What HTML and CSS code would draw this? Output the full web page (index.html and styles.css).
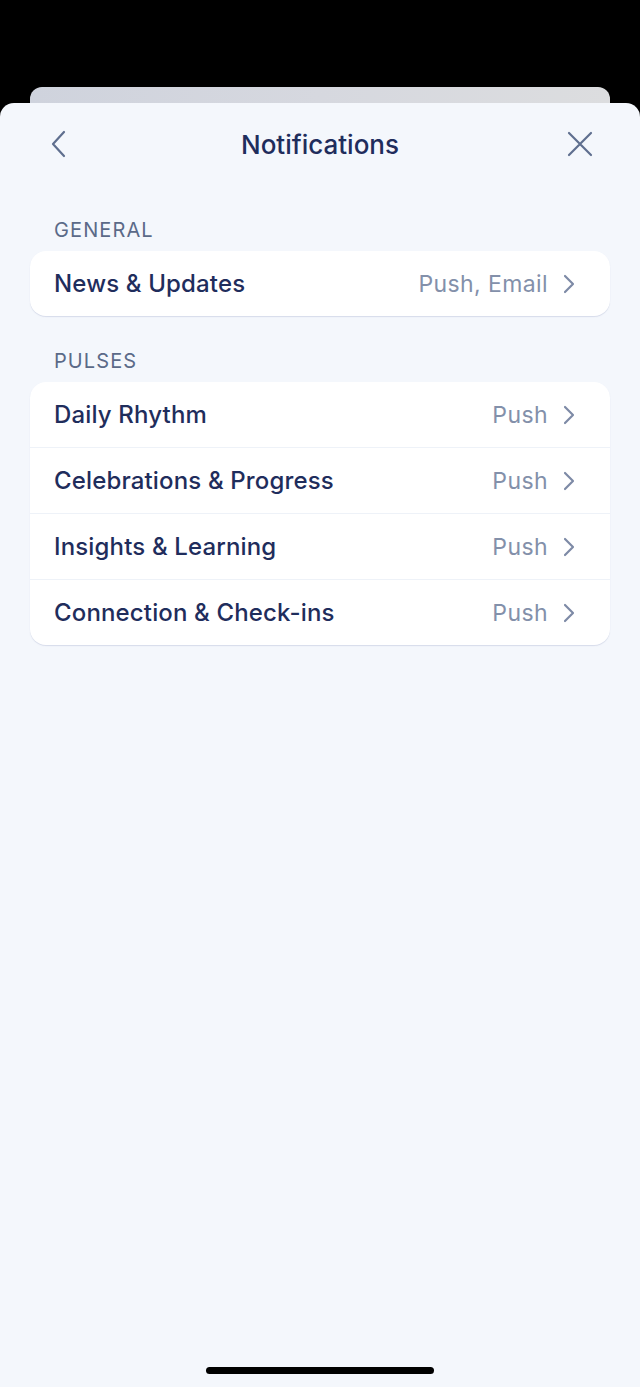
FILE: index.html
```html
<!DOCTYPE html>
<html>
<head>
<meta charset="utf-8">
<link rel="stylesheet" href="styles.css">
</head>
<body>
<div class="screen">
  <div class="back-sheet"></div>
  <div class="sheet">
    <div class="header">
      <button class="icon-btn" aria-label="Back">
        <svg width="24" height="28" viewBox="0 0 24 28"><path d="M16 2 L5 14 L16 26" fill="none" stroke="#5f6f8f" stroke-width="2.2" stroke-linecap="round" stroke-linejoin="round"/></svg>
      </button>
      <div class="title">Notifications</div>
      <button class="icon-btn" aria-label="Close">
        <svg width="26" height="26" viewBox="0 0 26 26"><path d="M2 2 L24 24 M24 2 L2 24" fill="none" stroke="#5f6f8f" stroke-width="2.2" stroke-linecap="round"/></svg>
      </button>
    </div>

    <div class="section-label first">GENERAL</div>
    <div class="card">
      <div class="row"><span class="row-title">News &amp; Updates</span><span class="row-value">Push, Email</span><svg class="chev" width="14" height="20" viewBox="0 0 14 20"><path d="M3 2 L11 10 L3 18" fill="none" stroke="#7d8aa6" stroke-width="2.2" stroke-linecap="round" stroke-linejoin="round"/></svg></div>
    </div>

    <div class="section-label">PULSES</div>
    <div class="card">
      <div class="row"><span class="row-title">Daily Rhythm</span><span class="row-value">Push</span><svg class="chev" width="14" height="20" viewBox="0 0 14 20"><path d="M3 2 L11 10 L3 18" fill="none" stroke="#7d8aa6" stroke-width="2.2" stroke-linecap="round" stroke-linejoin="round"/></svg></div>
      <div class="row"><span class="row-title">Celebrations &amp; Progress</span><span class="row-value">Push</span><svg class="chev" width="14" height="20" viewBox="0 0 14 20"><path d="M3 2 L11 10 L3 18" fill="none" stroke="#7d8aa6" stroke-width="2.2" stroke-linecap="round" stroke-linejoin="round"/></svg></div>
      <div class="row"><span class="row-title">Insights &amp; Learning</span><span class="row-value">Push</span><svg class="chev" width="14" height="20" viewBox="0 0 14 20"><path d="M3 2 L11 10 L3 18" fill="none" stroke="#7d8aa6" stroke-width="2.2" stroke-linecap="round" stroke-linejoin="round"/></svg></div>
      <div class="row"><span class="row-title">Connection &amp; Check-ins</span><span class="row-value">Push</span><svg class="chev" width="14" height="20" viewBox="0 0 14 20"><path d="M3 2 L11 10 L3 18" fill="none" stroke="#7d8aa6" stroke-width="2.2" stroke-linecap="round" stroke-linejoin="round"/></svg></div>
    </div>

    <div class="spacer"></div>
    <div class="home-indicator"></div>
  </div>
</div>
</body>
</html>
```

FILE: styles.css
```css
* { box-sizing: border-box; }
html, body {
  margin: 0;
  padding: 0;
  background: #000;
  font-family: Inter, "Noto Sans", sans-serif;
}
.screen {
  width: 640px;
  height: 1387px;
  display: flex;
  flex-direction: column;
  padding-top: 87px;
  overflow: hidden;
}
.back-sheet {
  height: 16px;
  margin: 0 30px;
  border-radius: 12px 12px 0 0;
  background: linear-gradient(90deg, #cfd3dd 0%, #d6d8df 50%, #dcdddf 100%);
  flex-shrink: 0;
}
.sheet {
  flex: 1;
  background: #f4f7fc;
  border-radius: 14px 14px 0 0;
  display: flex;
  flex-direction: column;
  padding: 20px 30px 0;
}
.header {
  height: 42px;
  display: flex;
  align-items: center;
  justify-content: space-between;
  padding: 0 16px 0 16px;
}
.icon-btn {
  background: none;
  border: 0;
  padding: 0;
  width: 28px;
  height: 28px;
  display: flex;
  align-items: center;
  justify-content: center;
}
.title {
  font-size: 26px;
  font-weight: 500;
  color: #1f2d5c;
}
.section-label {
  margin-top: 33px;
  padding-left: 24px;
  font-size: 20px;
  color: #5b6a88;
  letter-spacing: 1.1px;
  line-height: 24px;
  height: 24px;
}
.section-label.first { margin-top: 53px; }
.card {
  margin-top: 9px;
  background: #fff;
  border-radius: 16px;
  box-shadow: 0 1px 1px rgba(160, 170, 200, 0.35);
  overflow: hidden;
}
.row {
  height: 66px;
  display: flex;
  align-items: center;
  padding: 0 34px 0 24px;
  border-top: 1.5px solid #eef2f8;
}
.row:first-child { border-top: 0; height: 65px; }
.row-title {
  flex: 1;
  font-size: 24px;
  font-weight: 500;
  color: #1f2d5c;
  letter-spacing: 0.15px;
}
.row-value {
  font-size: 23px;
  color: #8390aa;
  letter-spacing: 0.4px;
  margin-right: 14px;
}
.chev { display: block; }
.spacer { flex: 1; }
.home-indicator {
  align-self: center;
  width: 228px;
  height: 7px;
  border-radius: 4px;
  background: #000;
  margin-bottom: 13px;
}
```
